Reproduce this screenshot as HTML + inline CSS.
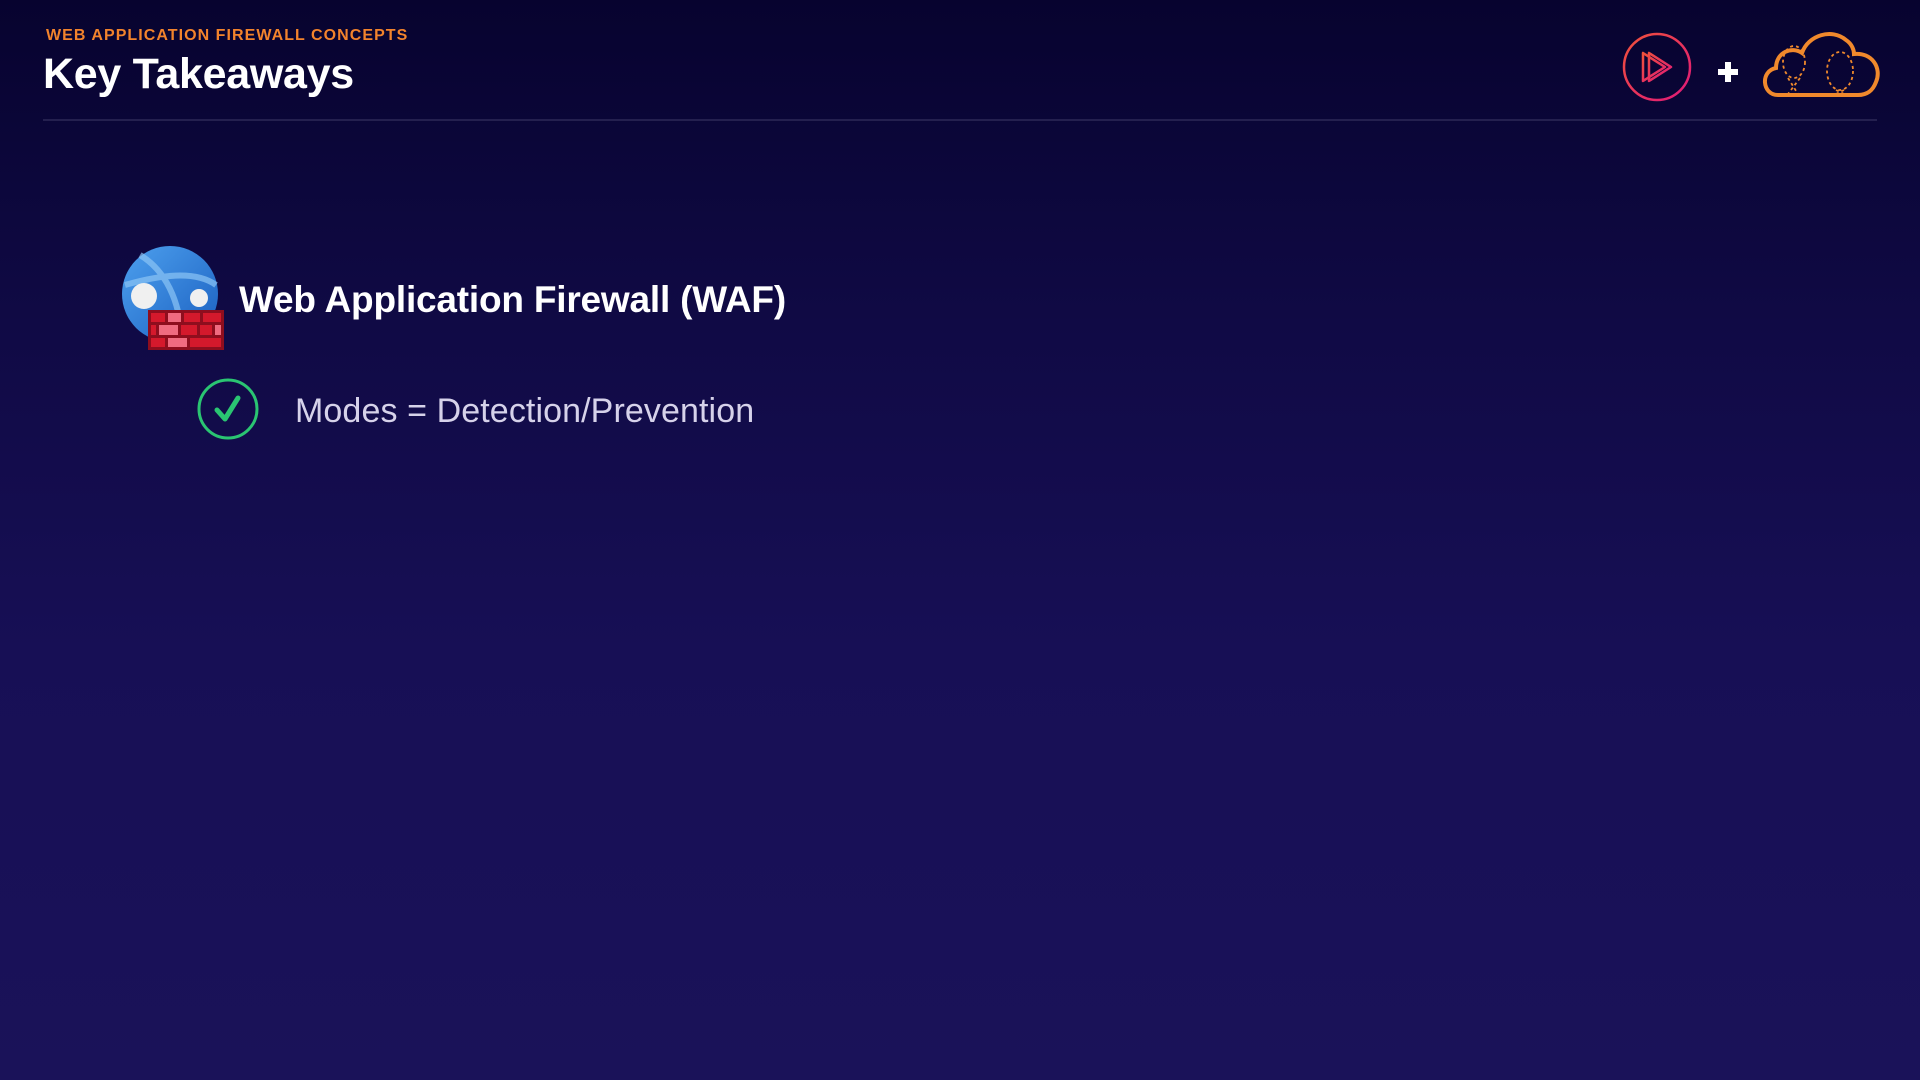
<!DOCTYPE html>
<html><head><meta charset="utf-8"><style>
html,body{margin:0;padding:0}
body{width:1920px;height:1080px;overflow:hidden;position:relative;font-family:"Liberation Sans",sans-serif;
background:linear-gradient(180deg,#07032f 0%,#100a45 30%,#170f55 60%,#1a1259 100%);}
.a{position:absolute;white-space:nowrap}
</style></head><body>
<div class="a" style="left:46px;top:27px;font-size:16px;font-weight:bold;color:#f2832c;letter-spacing:1.05px">WEB APPLICATION FIREWALL CONCEPTS</div>
<div class="a" style="left:43px;top:50px;font-size:43px;font-weight:bold;color:#fff;letter-spacing:-0.3px">Key Takeaways</div>
<div class="a" style="left:43px;top:119px;width:1834px;height:2px;background:#24204f"></div>

<svg class="a" style="left:1620px;top:30px" width="80" height="75" viewBox="0 0 80 75">
<defs><linearGradient id="g" x1="0" y1="0" x2="1" y2="1"><stop offset="0" stop-color="#f0523a"/><stop offset="1" stop-color="#e0187a"/></linearGradient></defs>
<circle cx="37" cy="37" r="33" fill="none" stroke="url(#g)" stroke-width="2.5"/>
<path d="M23 23 L23 51 L45 37 Z M29 23 L29 51 L51 37 Z" fill="none" stroke="url(#g)" stroke-width="2.5" stroke-linejoin="round"/>
</svg>
<div class="a" style="left:1718px;top:69px;width:20px;height:6px;background:#fff"></div>
<div class="a" style="left:1725px;top:62px;width:6px;height:20px;background:#fff"></div>
<svg class="a" style="left:1758px;top:28px" width="125" height="75" viewBox="0 0 125 75">
<path d="M20 67 C4 67 2 43 18 40 C18 24 34 18 44 25 C50 7 74 0 88 12 C94 16 96 22 96 26 C114 24 124 40 118 54 C115 62 110 67 100 67 Z" fill="none" stroke="#f0892c" stroke-width="4"/>
<g fill="none" stroke="#f0892c" stroke-width="1.8" stroke-dasharray="3 3">
<ellipse cx="36" cy="34" rx="11" ry="16"/><ellipse cx="82" cy="43" rx="13" ry="19"/>
<path d="M30 50 L40 66 M42 50 L30 66 M78 62 L86 66 M86 62 L78 66"/></g>
</svg>

<svg class="a" style="left:120px;top:245px" width="106" height="106" viewBox="0 0 106 106">
<defs><linearGradient id="b" x1="0" y1="0" x2="1" y2="1"><stop offset="0" stop-color="#4da0ee"/><stop offset="1" stop-color="#1a5fc0"/></linearGradient></defs>
<circle cx="50" cy="49" r="48" fill="url(#b)"/>
<path d="M20 10 C45 25 60 55 62 95 M5 40 C40 30 75 25 96 40" stroke="#8cc4f5" stroke-width="6" fill="none" opacity="0.7"/>
<circle cx="24" cy="51" r="13" fill="#f0f0f0"/><circle cx="79" cy="53" r="9" fill="#f0f0f0"/>
<rect x="28" y="65" width="76" height="40" fill="#8e0e1e"/>
<g fill="#d4192c"><rect x="31" y="68" width="14" height="9"/><rect x="64" y="68" width="16" height="9"/><rect x="83" y="68" width="18" height="9"/>
<rect x="31" y="80" width="5" height="10"/><rect x="61" y="80" width="16" height="10"/><rect x="80" y="80" width="12" height="10"/>
<rect x="31" y="93" width="14" height="9"/><rect x="70" y="93" width="31" height="9"/></g>
<g fill="#f06b80"><rect x="48" y="68" width="13" height="9"/><rect x="39" y="80" width="19" height="10"/><rect x="95" y="80" width="6" height="10"/><rect x="48" y="93" width="19" height="9"/></g>
</svg>
<div class="a" style="left:239px;top:279px;font-size:37px;font-weight:bold;color:#fff;letter-spacing:-0.2px">Web Application Firewall (WAF)</div>

<svg class="a" style="left:196px;top:377px" width="64" height="64" viewBox="0 0 64 64">
<circle cx="32" cy="32" r="29" fill="none" stroke="#2ac572" stroke-width="3"/>
<path d="M21 33 L29 42 L42 21" fill="none" stroke="#2ac572" stroke-width="5" stroke-linecap="round" stroke-linejoin="round"/>
</svg>
<div class="a" style="left:295px;top:392px;font-size:34px;color:#d6d2ea;letter-spacing:0.1px">Modes = Detection/Prevention</div>
</body></html>
